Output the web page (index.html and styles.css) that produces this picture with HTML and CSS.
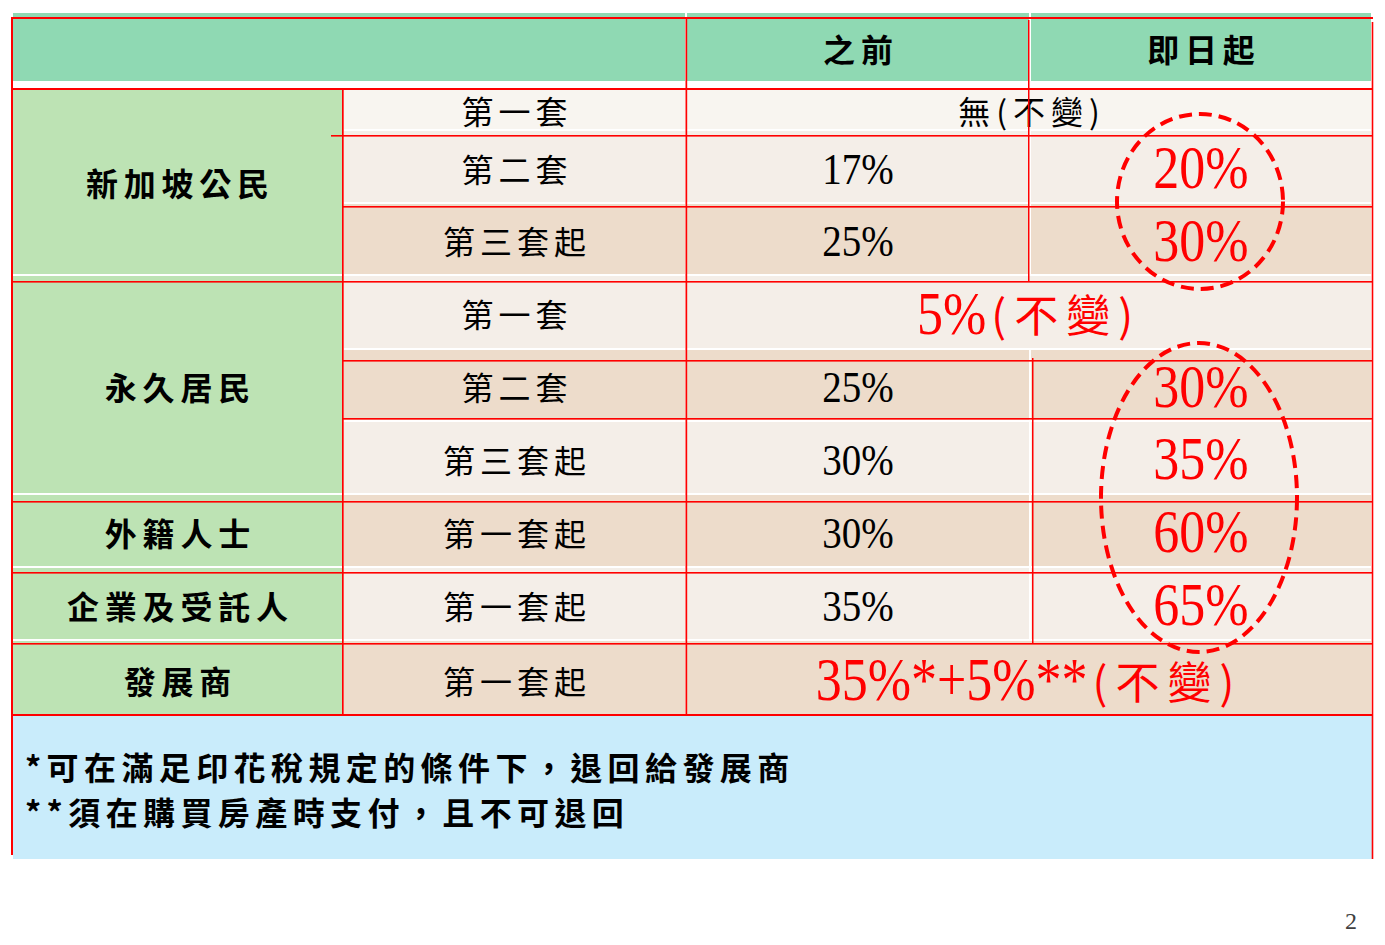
FILE: index.html
```html
<!DOCTYPE html>
<html lang="zh-Hant">
<head>
<meta charset="utf-8">
<title>額外買家印花稅</title>
<link rel="stylesheet" href="styles.css">
</head>
<body>
<div class="slide">
  <div class="grid">
    <div class="cell hd head-cell span12"></div>
    <div class="cell hd head-cell"><span class="tx b">之前</span></div>
    <div class="cell hd head-cell"><span class="tx b">即日起</span></div>

    <div class="cell g sg"><span class="tx b">新加坡公民</span></div>
    <div class="cell l1"><span class="tx">第一套</span></div>
    <div class="cell l1 span34"><span class="tx wide">無(不變)</span></div>
    <div class="cell l"><span class="tx">第二套</span></div>
    <div class="cell l"><span class="num">17%</span></div>
    <div class="cell l red"><span class="num rnum">20%</span></div>
    <div class="cell t"><span class="tx">第三套起</span></div>
    <div class="cell t"><span class="num">25%</span></div>
    <div class="cell t red"><span class="num rnum">30%</span></div>

    <div class="cell g pr"><span class="tx b">永久居民</span></div>
    <div class="cell l"><span class="tx">第一套</span></div>
    <div class="cell l span34 red"><span class="num rnum">5%</span><span class="rtx">(不變)</span></div>
    <div class="cell t"><span class="tx">第二套</span></div>
    <div class="cell t"><span class="num">25%</span></div>
    <div class="cell t red"><span class="num rnum">30%</span></div>
    <div class="cell l"><span class="tx">第三套起</span></div>
    <div class="cell l"><span class="num">30%</span></div>
    <div class="cell l red"><span class="num rnum">35%</span></div>

    <div class="cell g"><span class="tx b">外籍人士</span></div>
    <div class="cell t"><span class="tx">第一套起</span></div>
    <div class="cell t"><span class="num">30%</span></div>
    <div class="cell t red"><span class="num rnum">60%</span></div>

    <div class="cell g"><span class="tx b">企業及受託人</span></div>
    <div class="cell l"><span class="tx">第一套起</span></div>
    <div class="cell l"><span class="num">35%</span></div>
    <div class="cell l red"><span class="num rnum">65%</span></div>

    <div class="cell g"><span class="tx b">發展商</span></div>
    <div class="cell t"><span class="tx">第一套起</span></div>
    <div class="cell t span34 red"><span class="num rnum">35%*+5%**</span><span class="rtx">(不變)</span></div>
  </div>

  <div class="note">
    <p class="note-line">*可在滿足印花稅規定的條件下，退回給發展商</p>
    <p class="note-line">**須在購買房產時支付，且不可退回</p>
  </div>

  <div class="pgnum">2</div>

  <svg class="overlay" width="1385" height="945" viewBox="0 0 1385 945" aria-hidden="true">
    <g fill="#ff0000">
      <rect x="11" y="17" width="1362" height="2"/>
      <rect x="11" y="88" width="1362" height="2"/>
      <rect x="331" y="135" width="1042" height="1.6"/>
      <rect x="343" y="206" width="1030" height="1.6"/>
      <rect x="11" y="281" width="1362" height="1.6"/>
      <rect x="343" y="360" width="1030" height="1.6"/>
      <rect x="343" y="418" width="1030" height="1.6"/>
      <rect x="11" y="501" width="1362" height="1.6"/>
      <rect x="11" y="572" width="1362" height="1.6"/>
      <rect x="11" y="643" width="1362" height="1.6"/>
      <rect x="11" y="714" width="1362" height="2"/>
      <rect x="11" y="17" width="2" height="838"/>
      <rect x="342" y="88" width="1.7" height="627"/>
      <rect x="685.5" y="17" width="1.7" height="698"/>
      <rect x="1028" y="20" width="1.5" height="262"/>
      <rect x="1032" y="358" width="1.5" height="286"/>
      <rect x="1371.7" y="22" width="1.6" height="837"/>
    </g>
    <g fill="none" stroke="#ff0000" stroke-width="4" stroke-dasharray="13 7">
      <ellipse cx="1200" cy="201.5" rx="83" ry="87.5"/>
      <ellipse cx="1199" cy="497.5" rx="98" ry="154.5"/>
    </g>
  </svg>
</div>
</body>
</html>
```

FILE: styles.css
```css
html, body {
  margin: 0;
  padding: 0;
  background: #ffffff;
}

.slide {
  position: relative;
  width: 1385px;
  height: 945px;
  padding: 13px 0 0 13px;
  box-sizing: border-box;
  overflow: hidden;
  font-family: "Noto Sans CJK TC", "Noto Sans CJK SC", sans-serif;
  color: #000;
}

.grid {
  display: grid;
  width: 1358px;
  grid-template-columns: 329px 341px 342px 340px;
  grid-template-rows: 73px 41px 71px 70px 72px 70px 71px 71px 71px 75px;
  gap: 2px;
}

.cell {
  display: flex;
  align-items: center;
  justify-content: center;
  padding-top: 3px;
  box-sizing: border-box;
  font-size: 32px;
  line-height: 1.2;
  white-space: nowrap;
}

.head-cell { margin-bottom: 5px; }
.span12 { grid-column: 1 / 3; }
.span34 { grid-column: 3 / 5; }
.sg { grid-column: 1; grid-row: 2 / 5; }
.pr { grid-column: 1; grid-row: 5 / 8; }

.hd { background: #8fd9b3; }
.g  { background: #bde3b4; }
.l1 { background: #f8f5f0; }
.l  { background: #f4eee8; }
.t  { background: #eddccb; }

.tx {
  letter-spacing: 5px;
  padding-left: 5px;
}
.tx.wide { letter-spacing: 6px; padding-left: 6px; }
.tx.b { font-weight: 700; letter-spacing: 5.8px; padding-left: 5.8px; }

.num {
  display: inline-block;
  font-family: "Liberation Serif", serif;
  font-size: 39px;
  line-height: 1;
  transform: scaleY(1.14);
}
.rnum {
  font-size: 52px;
  transform: scaleY(1.16);
}
.red { color: #ff0000; }
.rtx {
  font-size: 44px;
  letter-spacing: 8px;
  margin-left: 5px;
}

.note {
  width: 1359px;
  height: 143px;
  background: #c9ecfb;
  padding: 28px 0 0 12px;
  box-sizing: border-box;
  font-size: 32px;
  font-weight: 700;
  line-height: 45px;
  letter-spacing: 5.4px;
  white-space: nowrap;
}
.note-line { margin: 0; }

.pgnum {
  margin-top: 50px;
  padding-right: 28px;
  text-align: right;
  font-family: "Liberation Serif", serif;
  font-size: 24px;
  line-height: 24px;
  color: #404040;
}

.overlay {
  position: absolute;
  top: 0;
  left: 0;
  pointer-events: none;
}
```
